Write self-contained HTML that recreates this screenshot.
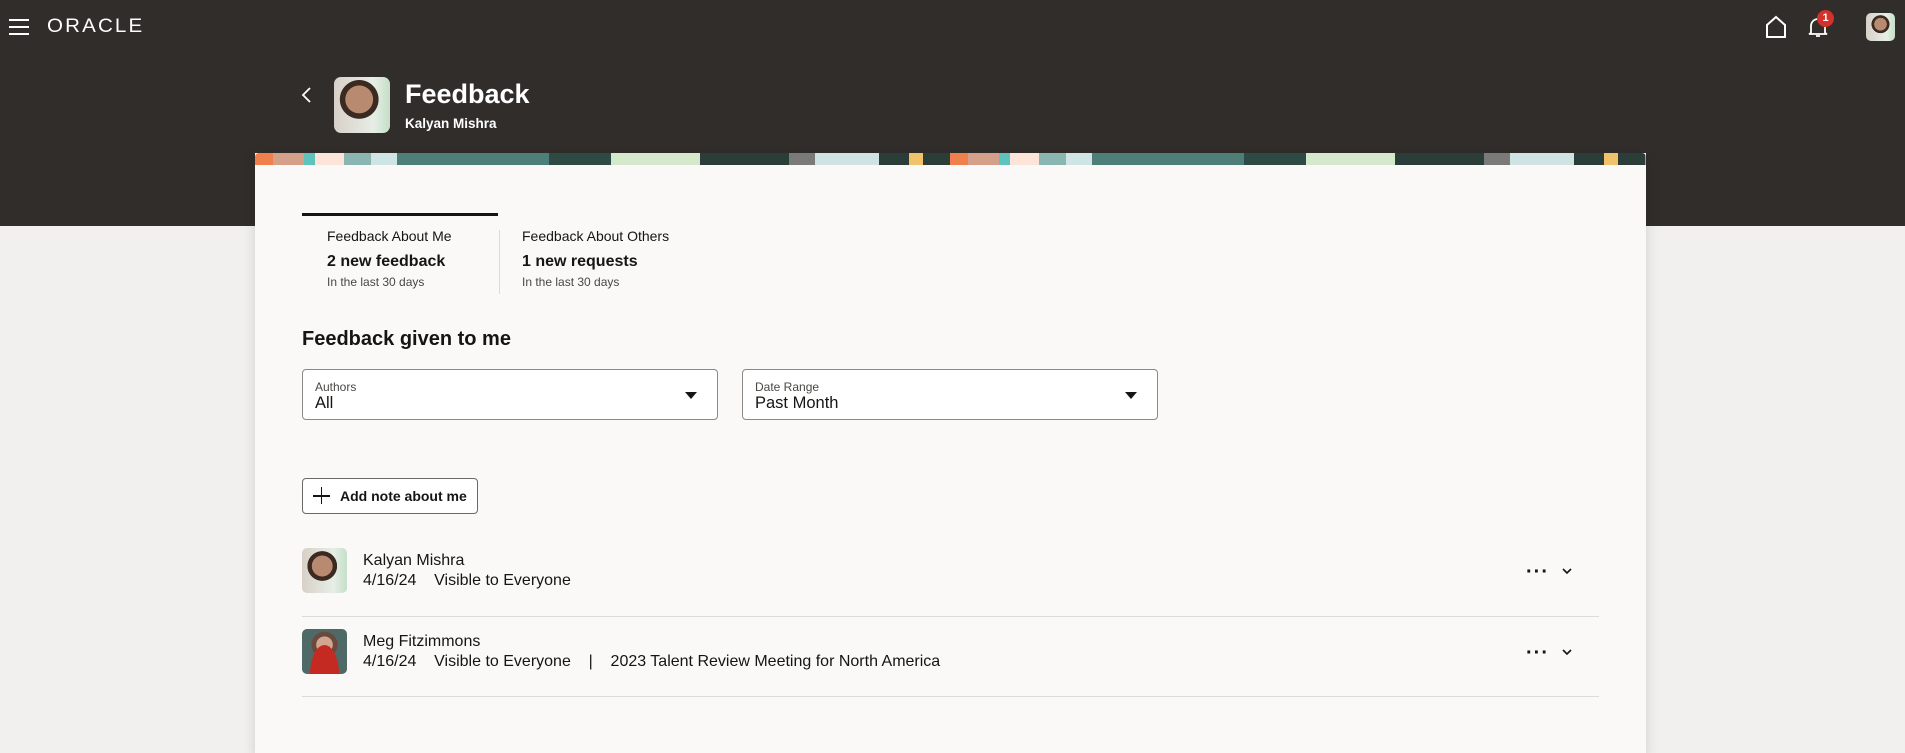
<!DOCTYPE html>
<html><head><meta charset="utf-8"><style>
*{box-sizing:border-box;margin:0;padding:0}
body{width:1905px;height:717px;overflow:hidden;background:#f1f0ee;font-family:"Liberation Sans",sans-serif;color:#161513;position:relative}
.top{position:absolute;left:0;top:0;width:1905px;height:226px;background:#312d2a}
.abs{position:absolute}
.card{position:absolute;left:255px;top:153px;width:1391px;height:600px;background:#faf9f8;box-shadow:0 4px 12px rgba(0,0,0,.15)}
.banner{position:absolute;left:0;top:0;width:1391px;height:12px;
background:linear-gradient(90deg,#f07f4e 0 18px,#d4a089 18px 49px,#5fc3bd 49px 60px,#fce4d8 60px 89px,#8ab5b0 89px 116px,#cfe5e3 116px 142px,#4e7e78 142px 294px,#2d4a44 294px 356px,#d4e8cc 356px 445px,#2a3d38 445px 534px,#7a7a78 534px 560px,#cfe3e3 560px 624px,#2a3d38 624px 654px,#f0c36b 654px 668px,#2a3d38 668px 695px);background-size:695px 12px;border-radius:4px 4px 0 0}
.dd{position:absolute;top:216px;width:416px;height:51px;border:1px solid #8b8986;border-radius:4px;background:#fff}
.dd .l{position:absolute;left:12px;top:10px;font-size:12px;color:#4a4743}
.dd .v{position:absolute;left:12px;top:24px;font-size:16.5px}
.dd .c{position:absolute;right:20px;top:22px;width:0;height:0;border-left:6px solid transparent;border-right:6px solid transparent;border-top:7px solid #161513}
.av{position:absolute;border-radius:5px;overflow:hidden}
.t{font-size:16px}
</style></head><body>
<div class="top"></div>
<div class="abs" style="left:9px;top:19px;width:20px;height:2px;background:#fff"></div>
<div class="abs" style="left:9px;top:26px;width:20px;height:2px;background:#fff"></div>
<div class="abs" style="left:9px;top:33px;width:20px;height:2px;background:#fff"></div>
<div class="abs" style="left:47px;top:16px;color:#fff;font-size:19px;letter-spacing:2px;transform:scaleX(1.08);transform-origin:left">ORACLE</div>
<svg class="abs" style="left:1764px;top:15px" width="24" height="24" viewBox="0 0 24 24"><path d="M3 22V10L12 2l9 8v12z" fill="none" stroke="#fff" stroke-width="2"/></svg>
<svg class="abs" style="left:1806px;top:15px" width="24" height="24" viewBox="0 0 24 24"><path d="M5 18V11a7 7 0 0114 0v7l2 1H3z M10 21h4" fill="none" stroke="#fff" stroke-width="1.8"/></svg>
<div class="abs" style="left:1817px;top:10px;width:17px;height:17px;border-radius:50%;background:#d3312b;color:#fff;font-size:11px;font-weight:bold;text-align:center;line-height:17px">1</div>
<div class="av" style="left:1866px;top:13px;width:29px;height:28px;background:radial-gradient(circle at 50% 40%,#b88a70 0 28%,#3a2a22 29% 40%,transparent 41%),linear-gradient(90deg,#d8d0c8,#e6eee6 70%,#c5dfc8)"></div>
<svg class="abs" style="left:300px;top:85px" width="14" height="20" viewBox="0 0 14 20"><path d="M10 3L3 10l7 7" fill="none" stroke="#fff" stroke-width="1.8"/></svg>
<div class="av" style="left:334px;top:77px;width:56px;height:56px;border-radius:7px;background:radial-gradient(circle at 45% 40%,#b88a70 0 30%,#3a2a22 31% 42%,transparent 43%),linear-gradient(90deg,#d8d0c8,#e6eee6 70%,#c5dfc8)"></div>
<div class="abs" style="left:405px;top:79px;color:#fff;font-size:27px;font-weight:bold">Feedback</div>
<div class="abs" style="left:405px;top:116px;color:#fff;font-size:13.5px;font-weight:bold">Kalyan Mishra</div>
<div class="card">
<div class="banner"></div>
<div class="abs" style="left:47px;top:60px;width:196px;height:3px;background:#161513"></div>
<div class="abs" style="left:244px;top:77px;width:1px;height:64px;background:#dcdbd9"></div>
<div class="abs" style="left:72px;top:75px;font-size:14px">Feedback About Me</div>
<div class="abs" style="left:72px;top:100px;font-size:16px;font-weight:bold">2 new feedback</div>
<div class="abs" style="left:72px;top:122px;font-size:12px;color:#4a4743">In the last 30 days</div>
<div class="abs" style="left:267px;top:75px;font-size:14px">Feedback About Others</div>
<div class="abs" style="left:267px;top:100px;font-size:16px;font-weight:bold">1 new requests</div>
<div class="abs" style="left:267px;top:122px;font-size:12px;color:#4a4743">In the last 30 days</div>
<div class="abs" style="left:47px;top:175px;font-size:20px;font-weight:bold">Feedback given to me</div>
<div class="dd" style="left:47px"><div class="l">Authors</div><div class="v">All</div><div class="c"></div></div>
<div class="dd" style="left:487px"><div class="l">Date Range</div><div class="v">Past Month</div><div class="c"></div></div>
<div class="abs" style="left:47px;top:325px;width:176px;height:36px;border:1px solid #6b6966;border-radius:4px;background:#fff"></div>
<div class="abs" style="left:58px;top:342px;width:17px;height:1.8px;background:#161513"></div>
<div class="abs" style="left:65.6px;top:334px;width:1.8px;height:17px;background:#161513"></div>
<div class="abs" style="left:85px;top:335px;font-size:14px;font-weight:bold">Add note about me</div>
<div class="av" style="left:47px;top:395px;width:45px;height:45px;background:radial-gradient(circle at 45% 40%,#b88a70 0 28%,#3a2a22 29% 40%,transparent 41%),linear-gradient(90deg,#d8d0c8,#e6eee6 70%,#c5dfc8)"></div>
<div class="abs t" style="left:108px;top:399px">Kalyan Mishra</div>
<div class="abs t" style="left:108px;top:419px">4/16/24&nbsp;&nbsp;&nbsp;&nbsp;Visible to Everyone</div>
<div class="abs" style="left:1271px;top:408px;font-size:20px;font-weight:bold;letter-spacing:1px">···</div>
<svg class="abs" style="left:1306px;top:413px" width="12" height="10" viewBox="0 0 12 10"><path d="M2 3l4 4 4-4" fill="none" stroke="#161513" stroke-width="1.6"/></svg>
<div class="abs" style="left:47px;top:463px;width:1297px;height:1px;background:#dcdbd9"></div>
<div class="av" style="left:47px;top:476px;width:45px;height:45px;background:radial-gradient(ellipse at 50% 100%,#c42a22 0 45%,transparent 46%),radial-gradient(circle at 50% 35%,#d0a690 0 22%,#6a4a3c 23% 35%,transparent 36%),#4f6a66"></div>
<div class="abs t" style="left:108px;top:480px">Meg Fitzimmons</div>
<div class="abs t" style="left:108px;top:500px">4/16/24&nbsp;&nbsp;&nbsp;&nbsp;Visible to Everyone&nbsp;&nbsp;&nbsp;&nbsp;|&nbsp;&nbsp;&nbsp;&nbsp;2023 Talent Review Meeting for North America</div>
<div class="abs" style="left:1271px;top:489px;font-size:20px;font-weight:bold;letter-spacing:1px">···</div>
<svg class="abs" style="left:1306px;top:494px" width="12" height="10" viewBox="0 0 12 10"><path d="M2 3l4 4 4-4" fill="none" stroke="#161513" stroke-width="1.6"/></svg>
<div class="abs" style="left:47px;top:543px;width:1297px;height:1px;background:#dcdbd9"></div>
</div>
</body></html>
